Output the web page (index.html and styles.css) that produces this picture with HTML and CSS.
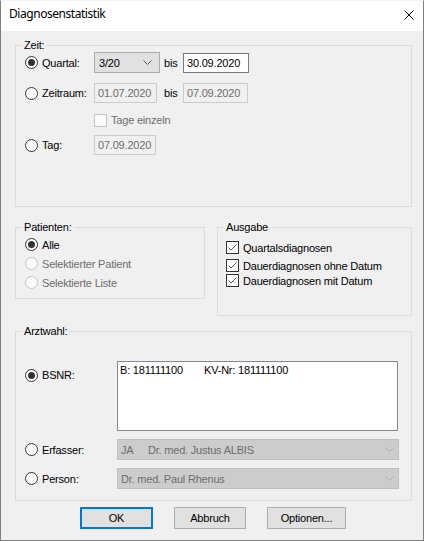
FILE: index.html
```html
<!DOCTYPE html>
<html lang="de">
<head>
<meta charset="utf-8">
<title>Diagnosenstatistik</title>
<link rel="stylesheet" href="styles.css">
</head>
<body>
<div class="window">
  <div class="titlebar">
    <span class="title">Diagnosenstatistik</span>
    <svg class="close" width="10" height="10" viewBox="0 0 10 10"><path d="M0.5 0.5 L9.5 9.5 M9.5 0.5 L0.5 9.5" stroke="#000" stroke-width="1"/></svg>
  </div>
  <div class="content">
    <div class="group zeit">
      <div class="group-title">Zeit:</div>
      <div class="zrow r1">
        <label class="opt"><span class="radio on"></span>Quartal:</label>
        <div class="combo quartal"><span>3/20</span><svg width="9" height="5" viewBox="0 0 9 5"><polyline points="0.5,0.5 4.5,4.5 8.5,0.5" fill="none" stroke="#555"/></svg></div>
        <span>bis</span>
        <div class="field date-end">30.09.2020</div>
      </div>
      <div class="zrow r2">
        <label class="opt"><span class="radio"></span>Zeitraum:</label>
        <div class="field dis date-from">01.07.2020</div>
        <span>bis</span>
        <div class="field dis date-to">07.09.2020</div>
      </div>
      <div class="zrow r3">
        <label class="opt span-all dis-text"><span class="check dis"></span>Tage einzeln</label>
      </div>
      <div class="zrow r4">
        <label class="opt"><span class="radio"></span>Tag:</label>
        <div class="field dis date-day">07.09.2020</div>
      </div>
    </div>
    <div class="mid">
      <div class="group patienten">
        <div class="group-title">Patienten:</div>
        <label class="opt prow first"><span class="radio on"></span>Alle</label>
        <label class="opt prow dis-text"><span class="radio dis"></span>Selektierter Patient</label>
        <label class="opt prow dis-text"><span class="radio dis"></span>Selektierte Liste</label>
      </div>
      <div class="group ausgabe">
        <div class="group-title">Ausgabe</div>
        <label class="opt crow c1"><span class="check"><svg width="11" height="11" viewBox="0 0 11 11"><polyline points="1.5,5.5 4,8 9.5,2.5" fill="none" stroke="#555" stroke-width="1"/></svg></span>Quartalsdiagnosen</label>
        <label class="opt crow c2"><span class="check"><svg width="11" height="11" viewBox="0 0 11 11"><polyline points="1.5,5.5 4,8 9.5,2.5" fill="none" stroke="#555" stroke-width="1"/></svg></span>Dauerdiagnosen ohne Datum</label>
        <label class="opt crow c3"><span class="check"><svg width="11" height="11" viewBox="0 0 11 11"><polyline points="1.5,5.5 4,8 9.5,2.5" fill="none" stroke="#555" stroke-width="1"/></svg></span>Dauerdiagnosen mit Datum</label>
      </div>
    </div>
    <div class="group arzt">
      <div class="group-title">Arztwahl:</div>
      <div class="arow bsnr">
        <label class="opt bsnr-label"><span class="radio on"></span>BSNR:</label>
        <div class="listbox"><span class="lb-col">B: 181111100</span><span>KV-Nr: 181111100</span></div>
      </div>
      <div class="arow">
        <label class="opt"><span class="radio"></span>Erfasser:</label>
        <div class="combo dis wide"><span><span class="lb-kz">JA</span>Dr. med. Justus ALBIS</span><svg width="9" height="5" viewBox="0 0 9 5"><polyline points="0.5,0.5 4.5,4.5 8.5,0.5" fill="none" stroke="#adadad"/></svg></div>
      </div>
      <div class="arow">
        <label class="opt"><span class="radio"></span>Person:</label>
        <div class="combo dis wide"><span>Dr. med. Paul Rhenus</span><svg width="9" height="5" viewBox="0 0 9 5"><polyline points="0.5,0.5 4.5,4.5 8.5,0.5" fill="none" stroke="#adadad"/></svg></div>
      </div>
    </div>
    <div class="btns">
      <div class="btn default ok">OK</div>
      <div class="btn cancel">Abbruch</div>
      <div class="btn options">Optionen...</div>
    </div>
  </div>
</div>
</body>
</html>
```
FILE: styles.css
```css
body {
  margin: 0;
  background: #ffffff;
}

.window {
  width: 424px;
  height: 541px;
  box-sizing: border-box;
  border: 1px solid #7f7f7f;
  border-top-color: #f2f2f2;
  display: flex;
  flex-direction: column;
  font-family: "Liberation Sans", Arial, sans-serif;
  font-size: 11px;
  letter-spacing: -0.2px;
  color: #000;
}

.titlebar {
  height: 30px;
  flex: none;
  background: #ffffff;
  display: flex;
  justify-content: space-between;
  align-items: flex-start;
}

.title {
  font-family: "Noto Sans", "Open Sans", sans-serif;
  font-size: 12px;
  line-height: 16px;
  letter-spacing: -0.45px;
  margin: 5px 0 0 8px;
}

.close {
  margin: 9px 9px 0 0;
}

.content {
  flex: 1;
  background: #f0f0f0;
  padding: 14px 11px 0 14px;
}

.group {
  box-sizing: border-box;
  border: 1px solid #dcdcdc;
}

.group-title {
  width: fit-content;
  margin: -8px 0 -6px 6px;
  padding: 0 2px;
  line-height: 14px;
  background: #f0f0f0;
}

.zeit {
  height: 162px;
}

.zrow {
  display: grid;
  grid-template-columns: 69px 70px 19px auto;
  align-items: center;
  margin-left: 9px;
}

.r1 { margin-top: 6px; height: 21px; }
.r2 { margin-top: 10px; height: 20px; }
.r3 { margin-top: 10px; height: 13px; }
.r4 { margin-top: 9px; height: 20px; }

.span-all {
  grid-column: 2 / span 3;
}

.opt {
  display: flex;
  align-items: center;
  gap: 4px;
  line-height: 14px;
  white-space: nowrap;
}

.radio {
  width: 13px;
  height: 13px;
  box-sizing: border-box;
  border: 1px solid #333;
  border-radius: 50%;
  background: #fff;
  display: flex;
  align-items: center;
  justify-content: center;
  flex: none;
}

.radio.on::after {
  content: "";
  width: 7px;
  height: 7px;
  border-radius: 50%;
  background: #333;
}

.radio.dis {
  border-color: #c4c4c4;
  background: #fbfbfb;
}

.dis-text {
  color: #6d6d6d;
}

.check {
  width: 13px;
  height: 13px;
  box-sizing: border-box;
  border: 1px solid #333;
  background: #fff;
  flex: none;
  display: flex;
}

.check.dis {
  border-color: #c4c4c4;
  background: #fbfbfb;
}

.field {
  box-sizing: border-box;
  height: 20px;
  border: 1px solid #7a7a7a;
  background: #fff;
  padding: 0 3px;
  display: flex;
  align-items: center;
  line-height: 14px;
}

.field.dis {
  border-color: #cccccc;
  background: #f0f0f0;
  color: #6d6d6d;
}

.date-end { width: 66px; }
.date-from { width: 63px; }
.date-to { width: 65px; }
.date-day { width: 62px; }

.combo {
  box-sizing: border-box;
  height: 21px;
  border: 1px solid #adadad;
  background: #e1e1e1;
  display: flex;
  align-items: center;
  justify-content: space-between;
  padding: 0 7px 0 4px;
  line-height: 14px;
  white-space: nowrap;
}

.quartal { width: 66px; }

.combo.dis {
  background: #cccccc;
  border-color: #bfbfbf;
  color: #6d6d6d;
  padding: 0 4px 0 3px;
}

.wide { width: 282px; }

.lb-kz {
  display: inline-block;
  width: 27px;
}

.mid {
  display: flex;
  align-items: flex-start;
  gap: 12px;
  margin-top: 20px;
}

.patienten {
  width: 190px;
  height: 72px;
}

.prow {
  height: 19px;
  margin-left: 9px;
}

.prow.first {
  margin-top: 7px;
}

.ausgabe {
  width: 195px;
  height: 89px;
}

.crow {
  height: 15px;
  margin-left: 8px;
}

.c1 { margin-top: 12px; }
.c2 { margin-top: 3px; }
.c3 { margin-top: 0; }

.arzt {
  height: 170px;
  margin-top: 15px;
}

.arow {
  display: grid;
  grid-template-columns: 92px 282px;
  align-items: center;
  margin-left: 9px;
  margin-top: 8px;
}

.arow.bsnr {
  margin-top: 29px;
  align-items: start;
}

.bsnr-label {
  margin-top: 7px;
}

.listbox {
  box-sizing: border-box;
  height: 70px;
  width: 281px;
  border: 1px solid #828790;
  background: #fff;
  padding: 1px 0 0 2px;
  line-height: 14px;
  white-space: nowrap;
}

.lb-col {
  display: inline-block;
  width: 84px;
}

.btns {
  display: flex;
  gap: 21px;
  margin: 6px 0 0 65px;
}

.btn {
  box-sizing: border-box;
  height: 22px;
  border: 1px solid #adadad;
  background: #e1e1e1;
  display: flex;
  align-items: center;
  justify-content: center;
}

.btn.default {
  border: 2px solid #0078d7;
}

.ok { width: 73px; }
.cancel { width: 72px; }
.options { width: 79px; }
```
